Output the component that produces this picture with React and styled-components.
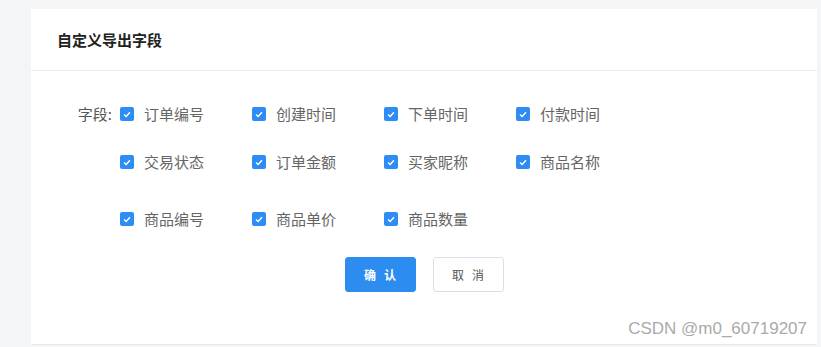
import React from "react";
import styled, { createGlobalStyle } from "styled-components";

const GlobalStyle = createGlobalStyle`
  html, body {
    margin: 0;
    padding: 0;
    background: #f4f5f7;
    font-family: "Noto Sans CJK SC", "Noto Sans", sans-serif;
  }
`;

const Page = styled.div`
  position: relative;
  width: 821px;
  height: 347px;
  padding: 9px 4px 2px 31px;
  box-sizing: border-box;
  overflow: hidden;
`;

const Card = styled.div`
  background: #fff;
  height: 100%;
  border-bottom: 1px solid #e8e9ec;
  box-sizing: border-box;
`;

const Header = styled.div`
  height: 61px;
  display: flex;
  align-items: center;
  padding-left: 26px;
  border-bottom: 1px solid #ebedf0;
  font-size: 15px;
  font-weight: 700;
  color: #222;
`;

const Body = styled.div`
  padding-top: 32px;
`;

const FieldRow = styled.div`
  display: grid;
  grid-template-columns: 81px 1fr;
  column-gap: 8px;
`;

const FieldLabel = styled.div`
  text-align: right;
  font-size: 15px;
  line-height: 22px;
  color: #555;
`;

const Options = styled.div`
  display: grid;
  grid-template-columns: repeat(4, 132px);
  grid-template-rows: 22px 22px 22px;
  row-gap: ${(p) => p.gap};
`;

const Option = styled.label`
  display: flex;
  align-items: center;
  gap: 10px;
  font-size: 15px;
  line-height: 22px;
  color: #666;
  margin-top: ${(p) => p.shift || 0}px;
`;

const Box = styled.span`
  width: 14px;
  height: 14px;
  border-radius: 2px;
  background: #2e8df5;
  display: flex;
  align-items: center;
  justify-content: center;
`;

const Actions = styled.div`
  display: flex;
  justify-content: center;
  gap: 17px;
  margin-top: 36px;
`;

const Button = styled.button`
  width: 71px;
  height: 35px;
  border-radius: 3px;
  font-family: "Noto Sans CJK SC", sans-serif;
  font-size: 12px;
  letter-spacing: 8px;
  text-indent: 8px;
  border: 1px solid ${(p) => (p.primary ? "#2d8cf0" : "#dcdfe6")};
  background: ${(p) => (p.primary ? "#2d8cf0" : "#fff")};
  color: ${(p) => (p.primary ? "#fff" : "#555")};
  font-weight: ${(p) => (p.primary ? 700 : 400)};
`;

const Watermark = styled.div`
  position: absolute;
  right: 14px;
  bottom: 8px;
  font-family: "Liberation Sans", Arial, sans-serif;
  font-size: 17px;
  color: #aaa;
`;

const Check = () => (
  <Box>
    <svg width="8" height="7" viewBox="0 0 8 7">
      <path d="M1 3.6 L3.1 5.5 L7 1.2" fill="none" stroke="#fff" strokeWidth="1.4" />
    </svg>
  </Box>
);

const fields = [
  ["订单编号", "创建时间", "下单时间", "付款时间"],
  ["交易状态", "订单金额", "买家昵称", "商品名称"],
  ["商品编号", "商品单价", "商品数量"],
];

const App = () => {
  return (
    <Page>
      <GlobalStyle />
      <Card>
        <Header>自定义导出字段</Header>
        <Body>
          <FieldRow>
            <FieldLabel>字段:</FieldLabel>
            <Options gap="26px">
              {fields.map((row, r) =>
                row.map((name) => (
                  <Option key={name} shift={r === 2 ? 18 : 0}>
                    <Check />
                    {name}
                  </Option>
                ))
              )}
            </Options>
          </FieldRow>
          <Actions>
            <Button primary>确认</Button>
            <Button>取消</Button>
          </Actions>
        </Body>
      </Card>
      <Watermark>CSDN @m0_60719207</Watermark>
    </Page>
  );
};

export default App;
